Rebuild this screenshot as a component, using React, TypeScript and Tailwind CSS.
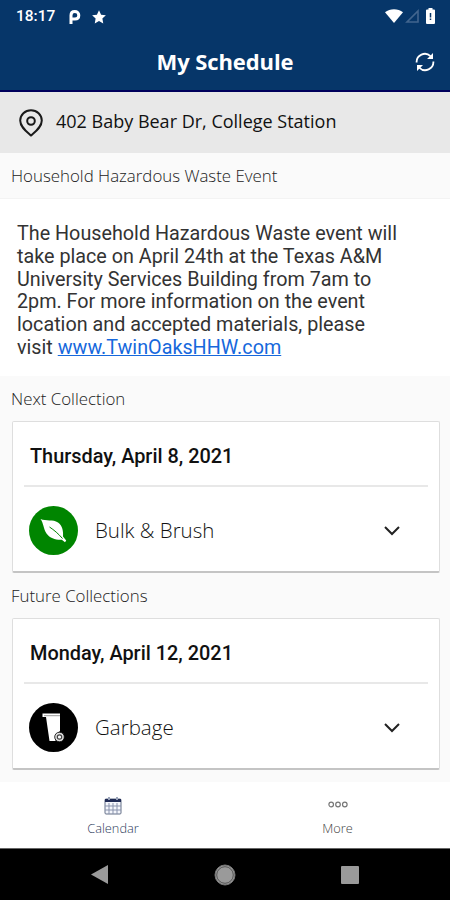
import type { ReactNode } from "react";

const openSans = "font-['Open_Sans','Noto_Sans',sans-serif]";

function StatusBar() {
  return (
    <div className="flex h-8 items-center justify-between pl-4 pr-[15px] pt-[1px]">
      <div className="flex items-center">
        <span className="w-[53px] text-[15.500px] font-medium leading-none">18:17</span>
        <svg width="12" height="14" viewBox="0 0 12 14" fill="none" stroke="currentColor" strokeWidth="3">
          <path d="M2 14V5.200C2 3 3.500 1.500 5.800 1.500S9.800 3 9.800 5.200 8.300 9 6 9H2" />
        </svg>
        <svg className="ml-[11px]" width="14" height="14" viewBox="0 0 24 24" fill="currentColor">
          <path d="M12 .500l3.600 7.500 8.200 1-6 5.700 1.500 8.300L12 19l-7.300 4 1.500-8.300-6-5.700 8.200-1z" />
        </svg>
      </div>
      <div className="flex items-center pb-[1px]">
        <svg width="18" height="14" viewBox="0 0 18 14" fill="currentColor">
          <path d="M0 3.300C5 -.8 13 -.8 18 3.300L9 14z" />
        </svg>
        <svg className="ml-[2px] text-[#42658e]" width="14" height="14" viewBox="0 0 14 14" fill="none" stroke="currentColor" strokeWidth="1.600">
          <path d="M13 2V13H2z" />
        </svg>
        <svg className="ml-[7px]" width="9" height="16" viewBox="0 0 9 16">
          <path d="M2.500 0h4v1.500H8a1 1 0 0 1 1 1V15a1 1 0 0 1-1 1H1a1 1 0 0 1-1-1V2.500a1 1 0 0 1 1-1h1.500z" fill="currentColor" />
          <path d="M4.500 5v4.500M4.500 10.500v1.500" stroke="#063669" strokeWidth="1.500" />
        </svg>
      </div>
    </div>
  );
}

function Header() {
  return (
    <header className="h-[92px] border-b-2 border-[#00005c] bg-[#063669] text-white">
      <StatusBar />
      <div className="grid h-[60px] grid-cols-[1fr_auto_1fr] items-center pb-[1px]">
        <h1 className={`col-start-2 text-[22px] font-bold tracking-[-0.1px] ${openSans}`}>My Schedule</h1>
        <button type="button" aria-label="Refresh" className="mr-[15px] justify-self-end">
          <svg width="20" height="20" viewBox="0 0 20 20" fill="none" stroke="currentColor" strokeWidth="1.800">
            <path d="M1.600 10.500A8.200 8.200 0 0 1 15.500 4.200" />
            <path d="M18.400 9.500A8.200 8.200 0 0 1 4.500 15.800" />
            <path d="M18 1v6h-6zM2 19v-6h6z" fill="currentColor" stroke="none" />
          </svg>
        </button>
      </div>
    </header>
  );
}

function LeafIcon() {
  return (
    <svg width="49" height="49" viewBox="0 0 49 49">
      <circle cx="24.500" cy="24.500" r="24.500" fill="#008500" />
      <path d="M11.500 13C17 15.500 24 13 29 16.500c4.500 3.200 5.500 9 5 14l3.200 4-1.200 1.800-3.200-2.600C27 34 21 32.500 17.500 27.500 14.500 23 14.500 17 11.500 13z" fill="#fff" />
      <path d="M20.500 21c4.500 3 9 6.800 13 11.500" fill="none" stroke="#008500" strokeWidth="1" />
    </svg>
  );
}

function BinIcon() {
  return (
    <svg width="49" height="49" viewBox="0 0 49 49">
      <circle cx="24.500" cy="24.500" r="24.500" fill="#000" />
      <path d="M13.500 10.500H31v17.500l-4.500 4.500v5.500h-6l-3.500-24h-3.500z" fill="#fff" />
      <path d="M15 12.700h16" stroke="#999" strokeWidth="1" />
      <circle cx="30.500" cy="34" r="4.800" fill="#ddd" stroke="#000" strokeWidth="0.800" />
      <circle cx="30.500" cy="34" r="2.200" fill="#fff" stroke="#444" strokeWidth="1.200" />
    </svg>
  );
}

function CollectionCard({ date, name, icon }: { date: string; name: string; icon: ReactNode }) {
  return (
    <article className="ml-[12px] mr-[10px] h-[152px] rounded-[2px] border border-b-2 border-[#dedede] border-b-[#c4c4c4] bg-white px-[11px]">
      <h2 className="flex h-[65px] items-center border-b-2 border-[#e8e8e8] pl-[6px] pt-[6px] text-[19.900px] font-medium text-[#111]">
        {date}
      </h2>
      <div className="flex h-[84px] items-center pl-[5px] pr-[28px] pt-[3px]">
        {icon}
        <span className={`ml-[17px] flex-1 text-[20.500px] font-light text-[#111] ${openSans}`}>{name}</span>
        <svg width="16" height="10" viewBox="0 0 16 10" fill="none" stroke="#222" strokeWidth="2">
          <path d="M1 1l7 7 7-7" />
        </svg>
      </div>
    </article>
  );
}

function SectionLabel({ children }: { children: ReactNode }) {
  return (
    <h3 className={`flex h-[45px] items-center pl-[11px] pt-[1px] text-[16.850px] font-light text-[#222] ${openSans}`}>
      {children}
    </h3>
  );
}

function TabBar() {
  return (
    <nav className={`grid h-[66px] grid-cols-2 bg-white text-[12.800px] font-light ${openSans}`}>
      <button type="button" className="flex flex-col items-center pl-[1px] pt-[14px] text-[#2e3b5c]">
        <svg width="18" height="19" viewBox="0 0 18 19" fill="none">
          <rect x="1" y="3" width="16" height="15" rx="1" fill="#f4f6fc" stroke="#657088" />
          <path d="M1 3h16v3H1z" fill="#202b55" />
          <path d="M5 7v11M9 7v11M13 7v11M1 10h16M1 14h16" stroke="#8993ad" />
          <path d="M5 1v3M13 1v3" stroke="#9aa4ba" strokeWidth="2" />
        </svg>
        <span className="mt-[5px] leading-[17px]">Calendar</span>
      </button>
      <button type="button" className="flex flex-col items-center pt-[14px] text-[#444]">
        <svg width="20" height="19" viewBox="0 0 20 19" fill="none" stroke="#777" strokeWidth="1.200">
          <circle cx="3.200" cy="8.500" r="2.300" />
          <circle cx="10" cy="8.500" r="2.300" />
          <circle cx="16.800" cy="8.500" r="2.300" />
        </svg>
        <span className="mt-[5px] leading-[17px]">More</span>
      </button>
    </nav>
  );
}

function SystemNav() {
  return (
    <div className="flex h-[52px] items-center justify-between border-t border-[#666] bg-black px-[91px] text-[#9a9a9a]">
      <svg width="17" height="19" viewBox="0 0 17 19" fill="currentColor">
        <path d="M0 9.500L17 0v19z" />
      </svg>
      <svg width="22" height="22" viewBox="0 0 22 22">
        <circle cx="11" cy="11" r="10" fill="#9a9a9a" stroke="#777" strokeWidth="1" />
        <circle cx="11" cy="11" r="8.300" fill="none" stroke="#555" strokeWidth="1" />
      </svg>
      <span className="size-[18px] rounded-[1px] bg-current" />
    </div>
  );
}

export default function App() {
  return (
    <div className="flex h-[900px] w-[450px] flex-col overflow-hidden bg-[#fafafa] font-['Roboto',sans-serif]">
      <Header />
      <main className="flex-1">
        <div className="flex h-[61px] items-center bg-[#e8e8e8] pl-[19px]">
          <svg width="24" height="28" viewBox="0 0 24 28" fill="none" stroke="#1a1a1a" strokeWidth="2">
            <path d="M12 26.500C7.500 22.500 1.200 18 1.200 11.500a10.800 10.300 0 0 1 21.600 0C22.800 18 16.500 22.500 12 26.500z" />
            <circle cx="12" cy="12" r="3.800" />
          </svg>
          <span className={`ml-[13px] pb-[2px] text-[18px] text-[#111] ${openSans}`}>402 Baby Bear Dr, College Station</span>
        </div>
        <SectionLabel>Household Hazardous Waste Event</SectionLabel>
        <p className="h-[178px] border-t border-[#f3f3f3] bg-white pl-[17px] pt-[24px] text-[19.750px] leading-[22.800px] text-[#333]">
          The Household Hazardous Waste event will
          <br />
          take place on April 24th at the Texas A&amp;M
          <br />
          University Services Building from 7am to
          <br />
          2pm. For more information on the event
          <br />
          location and accepted materials, please
          <br />
          visit <a href="#" className="text-[#1668dc] underline decoration-1">www.TwinOaksHHW.com</a>
        </p>
        <SectionLabel>Next Collection</SectionLabel>
        <CollectionCard date="Thursday, April 8, 2021" name="Bulk & Brush" icon={<LeafIcon />} />
        <SectionLabel>Future Collections</SectionLabel>
        <CollectionCard date="Monday, April 12, 2021" name="Garbage" icon={<BinIcon />} />
      </main>
      <TabBar />
      <SystemNav />
    </div>
  );
}
